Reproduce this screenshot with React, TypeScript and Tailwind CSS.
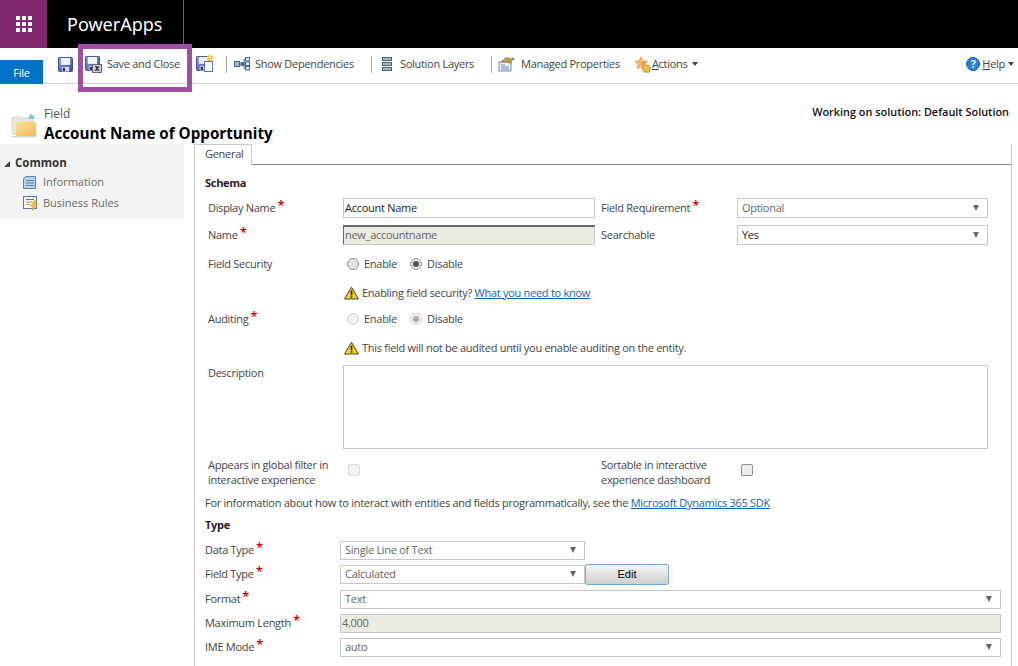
import type { ReactNode } from 'react';

const labelText = 'text-[#444444]';

function Star() {
  return <span className="text-[#cc0000] text-[13px] font-semibold leading-none relative -top-[2px] ml-[2px]">*</span>;
}

function Floppy({ className = '', id }: { className?: string; id: string }) {
  return (
    <svg viewBox="0 0 16 16" className={className}>
      <defs>
        <linearGradient id={id} x1="0" y1="0" x2="1" y2="1">
          <stop offset="0" stopColor="#8a9ae6" />
          <stop offset="1" stopColor="#3c4aa6" />
        </linearGradient>
      </defs>
      <rect x="0.5" y="0.5" width="15" height="15" rx="1" fill={`url(#${id})`} stroke="#3a4590" />
      <rect x="3" y="1" width="10" height="7.5" fill="#eef0fb" />
      <rect x="4" y="10.5" width="8" height="5" fill="#d5d8e6" />
      <rect x="5" y="11.5" width="2.5" height="3.5" fill="#2b3260" />
    </svg>
  );
}

function Warning() {
  return (
    <svg viewBox="0 0 16 14" className="w-[15px] h-[14px] shrink-0">
      <path d="M8 .8 15.4 13.4H.6Z" fill="#f7d31c" stroke="#333333" strokeWidth="1" strokeLinejoin="round" />
      <rect x="7.1" y="4.5" width="1.8" height="5" fill="#222222" />
      <rect x="7.1" y="10.3" width="1.8" height="1.8" fill="#222222" />
    </svg>
  );
}

function Radio({ checked, muted }: { checked?: boolean; muted?: boolean }) {
  return (
    <span className={`w-[12px] h-[12px] rounded-full border flex items-center justify-center ${muted ? 'border-[#cfcfcf] bg-[#f0f0f0]' : 'border-[#8f8f8f] bg-[#e6e6e6]'}`}>
      {checked && <span className={`w-[6px] h-[6px] rounded-full ${muted ? 'bg-[#a8a8a8]' : 'bg-[#555555]'}`} />}
    </span>
  );
}

function RadioPair({ muted }: { muted?: boolean }) {
  return (
    <div className={`flex items-center ml-[4px] ${labelText}`}>
      <Radio muted={muted} />
      <span className="ml-[5px] w-[46px]">Enable</span>
      <Radio checked muted={muted} />
      <span className="ml-[5px]">Disable</span>
    </div>
  );
}

function Caret() {
  return <span className="w-0 h-0 border-x-[3.5px] border-x-transparent border-t-[6px] border-t-[#666666]" />;
}

function Select({ value, className = '', dark }: { value: string; className?: string; dark?: boolean }) {
  return (
    <div className={`h-[19px] border border-[#c6c6c6] bg-white flex items-center justify-between pl-[4px] pr-[8px] ${dark ? 'text-[#222222]' : 'text-[#666666]'} ${className}`}>
      <span>{value}</span>
      <Caret />
    </div>
  );
}

function ToolItem({ icon, label, className = '' }: { icon: ReactNode; label: ReactNode; className?: string }) {
  return (
    <div className={`flex items-center ${className}`}>
      {icon}
      <span className="text-[#444444]">{label}</span>
    </div>
  );
}

function ToolSep({ className = '' }: { className?: string }) {
  return <span className={`w-px h-[17px] bg-[#a6a6a6] ${className}`} />;
}

function TypeRow({ label, children, className = '' }: { label: string; children: ReactNode; className?: string }) {
  return (
    <div className={`flex items-center h-[24px] ${className}`}>
      <div className={`w-[135px] ${labelText}`}>
        {label}
        <Star />
      </div>
      {children}
    </div>
  );
}

export default function App() {
  return (
    <div className="w-[1018px] h-[666px] overflow-hidden bg-white relative text-[11px] tracking-[-0.28px] font-['Open_Sans','Noto_Sans',sans-serif]">
      {/* top bar */}
      <div className="h-[48px] bg-black flex">
        <div className="w-[47px] bg-[#7f2870] flex items-center justify-center">
          <div className="w-[16px] grid grid-cols-3 gap-[2px]">
            {Array.from({ length: 9 }).map((_, i) => (
              <span key={i} className="w-[4px] h-[4px] bg-white" />
            ))}
          </div>
        </div>
        <div className="w-[137px] border-r border-[#666666] pl-[20px] flex items-center text-white text-[18px] tracking-normal font-['Noto_Sans',sans-serif]">
          PowerApps
        </div>
      </div>

      {/* command bar */}
      <div className="h-[36px] border-b border-[#d6d6d6] flex items-start relative">
        <div className="w-[43px] h-[24px] mt-[12px] pt-[2px] bg-[#0072c6] text-white flex items-center justify-center">File</div>
        <div className="flex items-center h-[32px] flex-1">
          <Floppy id="f1" className="w-[15px] h-[15px] ml-[15px]" />
          <ToolItem
            className="ml-[12px]"
            icon={
              <span className="relative w-[16px] h-[17px] mr-[6px]">
                <Floppy id="f2" className="w-[15px] h-[15px]" />
                <span className="absolute -right-[1px] bottom-0 w-[10px] h-[9px] bg-[#d0d0d0] border border-[#666666] text-[8px] font-bold leading-[6px] text-center text-[#222222]">x</span>
              </span>
            }
            label="Save and Close"
          />
          <span className="relative ml-[16px] w-[16px] h-[16px]">
            <Floppy id="f3" className="w-[15px] h-[15px]" />
            <span className="absolute -right-[1px] bottom-0 w-[9px] h-[11px] bg-white border border-[#5a6fae]" />
            <span className="absolute -right-[1px] -top-[1px] w-[6px] h-[6px] rounded-full bg-[#f5cf5a]" />
          </span>
          <ToolSep className="ml-[14px]" />
          <ToolItem
            className="ml-[7px]"
            icon={
              <svg viewBox="0 0 16 14" className="w-[16px] h-[14px] mr-[5px]" fill="none" stroke="#4b6a8c">
                <rect x="0.5" y="4.5" width="5" height="5" fill="#9db6d2" />
                <rect x="7" y="5.5" width="3" height="3" fill="#4b6a8c" />
                <rect x="11.5" y="0.5" width="4" height="3.5" fill="#dfe8f2" />
                <rect x="11.5" y="5" width="4" height="3.5" fill="#dfe8f2" />
                <rect x="11.5" y="9.5" width="4" height="3.5" fill="#dfe8f2" />
                <path d="M5.5 7h1.5M10 7h1.5M10 2.2h1.5M10 2.2v9h1.5" />
              </svg>
            }
            label="Show Dependencies"
          />
          <ToolSep className="ml-[17px]" />
          <ToolItem
            className="ml-[10px]"
            icon={
              <span className="flex flex-col gap-px w-[10px] mr-[8px]">
                <span className="h-[4px] bg-[#9fb4c8] border border-[#4b6278]" />
                <span className="h-[4px] bg-[#9fb4c8] border border-[#4b6278]" />
                <span className="h-[4px] bg-[#9fb4c8] border border-[#4b6278]" />
              </span>
            }
            label="Solution Layers"
          />
          <ToolSep className="ml-[17px]" />
          <ToolItem
            className="ml-[6px]"
            icon={
              <svg viewBox="0 0 17 16" className="w-[17px] h-[16px] mr-[6px]">
                <rect x="1" y="6" width="12" height="9" fill="#eef3f9" stroke="#6d8fb3" />
                <path d="M3 9h4M3 11h8M3 13h8" stroke="#6d8fb3" />
                <path d="M3 6 8 1.5l7 1.5-3 4.5-2-1.5Z" fill="#c8a24a" stroke="#7f6a2a" strokeWidth="0.6" />
                <path d="M14 1.5l2.5.5-1 3Z" fill="#3f9a4a" />
              </svg>
            }
            label="Managed Properties"
          />
          <ToolItem
            className="ml-[15px]"
            icon={
              <svg viewBox="0 0 17 17" className="w-[17px] h-[17px]">
                <path d="M6 .8 8 5l4.5.4-3.3 3 1 4.4L6 10.5 2 12.8l1-4.4-3-3L4 5Z" fill="#f8b878" stroke="#e08a3a" strokeWidth="0.7" />
                <path d="M7 6.5l1.8-.5 1.7 3 3.5.5 1.5 2.5-1 4.2H9.5L6.5 12l1.8-.5Z" fill="#f2bc3e" stroke="#a8701a" strokeWidth="0.6" />
              </svg>
            }
            label={<span><span className="underline">A</span>ctions</span>}
          />
          <span className="ml-[5px] w-0 h-0 border-x-[3px] border-x-transparent border-t-[4px] border-t-[#444444]" />
          <div className="ml-auto flex items-center mr-[4px]">
            <span className="w-[14px] h-[14px] rounded-full bg-[#2f7fd8] border border-[#1d5aa8] text-white text-[10px] font-bold leading-[12px] text-center mr-[2px]">?</span>
            <span className="text-[#444444]"><span className="underline">H</span>elp</span>
            <span className="ml-[3px] w-0 h-0 border-x-[3px] border-x-transparent border-t-[4px] border-t-[#444444]" />
          </div>
        </div>
      </div>

      {/* highlight around save and close */}
      <div className="absolute left-[78px] top-[44px] w-[114px] h-[48px] border-[5px] border-[#a04ea0]" />

      {/* title block */}
      <div className="h-[60px] relative flex">
        <svg viewBox="0 0 28 26" className="w-[28px] h-[26px] ml-[9px] mt-[28px] shrink-0">
          <defs>
            <linearGradient id="folder" x1="0" y1="0" x2="1" y2="1">
              <stop offset="0" stopColor="#fbe29a" />
              <stop offset="1" stopColor="#f3b85a" />
            </linearGradient>
          </defs>
          <path d="M3 6l6-2 2 2h13v16H3Z" fill="#ece6d6" stroke="#cfc6ae" strokeWidth="0.6" />
          <path d="M7 10h20v14H7Z" fill="url(#folder)" />
          <path d="M0 24h27l-1 1.5H4Z" fill="#d9d9d9" />
          <path d="M22 1l1 3 3-1-1.5 3 3 1H19l1.5-3Z" fill="#6fc3ee" />
        </svg>
        <div className="ml-[7px] mt-[22px]">
          <div className="text-[12px] tracking-normal leading-[16px] text-[#555555]">Field</div>
          <div className="text-[15.2px] tracking-normal leading-[20px] mt-[1px] font-bold text-black whitespace-nowrap">Account Name of Opportunity</div>
        </div>
        <div className="ml-auto mr-[9px] mt-[20px] text-[10.9px] tracking-normal font-semibold text-[#111111]">Working on solution: Default Solution</div>
      </div>

      <div className="flex">
        {/* side nav */}
        <div className="w-[184px] h-[75px] bg-[#f3f3f3] shrink-0 pt-[11px] pl-[4px] tracking-normal">
          <div className="flex items-center h-[15px]">
            <span className="w-0 h-0 mt-[2px] border-l-[6px] border-l-transparent border-b-[6px] border-b-[#444444]" />
            <span className="ml-[5px] text-[11.5px] font-bold text-[#333333]">Common</span>
          </div>
          <div className="flex items-center h-[21px] mt-[2px] ml-[19px] text-[#6b6b6b]">
            <svg viewBox="0 0 13 13" className="w-[13px] h-[13px] mr-[7px]">
              <path d="M2.5.5h10v12H.5V3Z" fill="#b9d0ea" stroke="#5f81a8" />
              <path d="M3 4.5h8M3 7h8M3 9.5h8" stroke="#5f81a8" />
            </svg>
            Information
          </div>
          <div className="flex items-center h-[21px] ml-[19px] text-[#6b6b6b]">
            <svg viewBox="0 0 15 15" className="w-[15px] h-[15px] mr-[5px]">
              <rect x="0.5" y="0.5" width="13" height="12" fill="#f6f6f6" stroke="#5f7699" />
              <path d="M3 3.5h8" stroke="#5f7699" />
              <path d="M3 6h6M3 8.5h4" stroke="#d99a3a" />
              <path d="M11 5 7.5 10h2.5L9 15l5.5-6.5H12L13.5 5Z" fill="#eec23c" stroke="#b58a1e" strokeWidth="0.4" />
            </svg>
            Business Rules
          </div>
        </div>

        {/* form panel */}
        <div className="ml-[10px] w-[818px] h-[522px] border-l border-r border-[#c9c9c9] relative">
          <div className="flex h-[21px]">
            <div className="w-[58px] -ml-px border border-b-0 border-[#c9c9c9] pl-[10px] pb-[2px] flex items-center text-[#444444]">General</div>
            <div className="flex-1 border-b border-[#8a8a8a]" />
          </div>

          <div className="pl-[10px] pr-[10px]">
            <div className="font-bold text-[#222222] mt-[10px] h-[16px] leading-[16px]">Schema</div>

            <div className="flex items-center h-[20px] mt-[7px]">
              <div className={`w-[138px] pl-[3px] ${labelText}`}>Display Name<Star /></div>
              <div className="w-[252px] h-[20px] border border-[#c6c6c6] pl-[1px] flex items-center text-[#222222]">Account Name</div>
              <div className={`ml-[6px] w-[136px] ${labelText}`}>Field Requirement<Star /></div>
              <Select value="Optional" className="w-[251px] !h-[20px] bg-[#f7f7f7]" />
            </div>
            <div className="flex items-center h-[20px] mt-[7px]">
              <div className={`w-[138px] pl-[3px] ${labelText}`}>Name<Star /></div>
              <div className="w-[252px] h-[20px] border border-[#c6c6c6] border-t-[2px] border-t-[#666666] border-l-[#666666] bg-[#ebebe4] pl-[1px] flex items-center text-[#666666]">new_accountname</div>
              <div className={`ml-[6px] w-[136px] ${labelText}`}>Searchable</div>
              <Select value="Yes" dark className="w-[251px] !h-[20px]" />
            </div>

            <div className="flex items-center h-[20px] mt-[9px]">
              <div className={`w-[138px] pl-[3px] ${labelText}`}>Field Security</div>
              <RadioPair />
            </div>
            <div className="flex items-center h-[16px] ml-[139px] mt-[11px] text-[#444444]">
              <Warning />
              <span className="ml-[3px]">Enabling field security? <span className="text-[#1160b7] underline">What you need to know</span></span>
            </div>
            <div className="flex items-center h-[20px] mt-[8px]">
              <div className={`w-[138px] pl-[3px] ${labelText}`}>Auditing<Star /></div>
              <RadioPair muted />
            </div>
            <div className="flex items-center h-[16px] ml-[139px] mt-[11px] text-[#444444]">
              <Warning />
              <span className="ml-[3px]">This field will not be audited until you enable auditing on the entity.</span>
            </div>

            <div className="flex mt-[9px]">
              <div className={`w-[138px] pl-[3px] ${labelText}`}>Description</div>
              <div className="w-[645px] h-[84px] border border-[#c6c6c6]" />
            </div>

            <div className="flex mt-[8px] h-[30px]">
              <div className={`w-[138px] pl-[3px] leading-[15px] ${labelText}`}>Appears in global filter in<br />interactive experience</div>
              <span className="w-[12px] h-[12px] mt-[7px] ml-[5px] rounded-[2px] border border-[#d8d8d8] bg-[#f0f0f0]" />
              <div className={`ml-[241px] w-[140px] leading-[15px] ${labelText}`}>Sortable in interactive<br />experience dashboard</div>
              <span className="w-[12px] h-[12px] mt-[7px] rounded-[2px] border border-[#8f8f8f] bg-[#ececec]" />
            </div>

            <div className="mt-[8px] h-[16px] leading-[16px] text-[#444444]">
              For information about how to interact with entities and fields programmatically, see the <span className="text-[#1160b7] underline">Microsoft Dynamics 365 SDK</span>
            </div>

            <div className="font-bold text-[#222222] mt-[6px] h-[16px] leading-[16px]">Type</div>

            <div className="mt-[5px]">
              <TypeRow label="Data Type">
                <Select value="Single Line of Text" className="w-[245px]" />
              </TypeRow>
              <TypeRow label="Field Type">
                <Select value="Calculated" className="w-[245px]" />
                <button className="w-[84px] h-[21px] border-[1.5px] border-[#6aaeea] rounded-[2px] bg-gradient-to-b from-[#f5f5f5] to-[#cfcfcf] tracking-normal text-black font-['Liberation_Sans',sans-serif]">Edit</button>
              </TypeRow>
              <TypeRow label="Format" className="mt-[1px]">
                <Select value="Text" className="w-[661px]" />
              </TypeRow>
              <TypeRow label="Maximum Length">
                <div className="w-[661px] h-[19px] border border-[#c6c6c6] bg-[#ebebe4] pl-[1px] flex items-center text-[#666666]">4,000</div>
              </TypeRow>
              <TypeRow label="IME Mode">
                <Select value="auto" className="w-[661px]" />
              </TypeRow>
            </div>
          </div>
        </div>
      </div>
    </div>
  );
}
